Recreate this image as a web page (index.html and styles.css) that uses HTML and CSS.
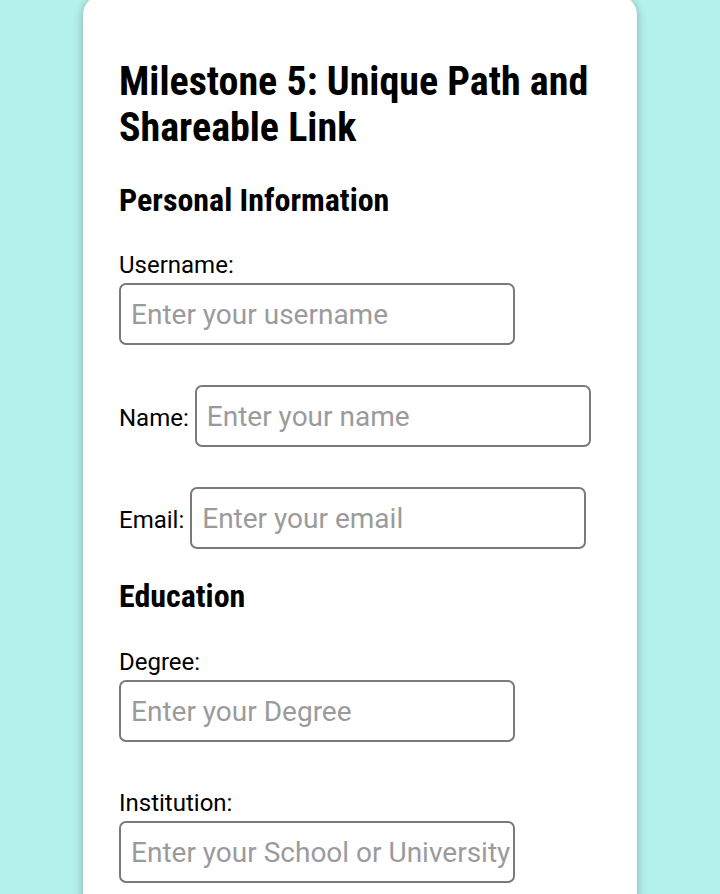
FILE: index.html
```html
<!DOCTYPE html>
<html lang="en">
<head>
<meta charset="utf-8">
<title>Milestone 5: Unique Path and Shareable Link</title>
<link rel="stylesheet" href="styles.css">
</head>
<body>
<main class="card">
  <h1 class="title">Milestone 5: Unique Path and Shareable Link</h1>

  <h2 class="section section--first">Personal Information</h2>
  <div class="field field--stacked field--after-heading">
    <label for="username">Username:</label>
    <input id="username" type="text" placeholder="Enter your username">
  </div>
  <div class="field field--inline">
    <label for="name">Name:</label>
    <input id="name" type="text" placeholder="Enter your name">
  </div>
  <div class="field field--inline">
    <label for="email">Email:</label>
    <input id="email" type="email" placeholder="Enter your email">
  </div>

  <h2 class="section section--next">Education</h2>
  <div class="field field--stacked field--after-heading-2">
    <label for="degree">Degree:</label>
    <input id="degree" type="text" placeholder="Enter your Degree">
  </div>
  <div class="field field--stacked field--spaced">
    <label for="institution">Institution:</label>
    <input id="institution" type="text" placeholder="Enter your School or University">
  </div>
</main>
</body>
</html>
```

FILE: styles.css
```css
html, body {
  margin: 0;
  height: 100%;
  overflow: hidden;
}

body {
  background: #b4f1ea;
  font-family: Roboto, "Noto Sans", sans-serif;
  color: #000;
}

.card {
  box-sizing: border-box;
  width: 554px;
  margin: -5px auto 0;
  min-height: 1000px;
  padding: 64px 38px 40px 36px;
  background: #fff;
  border-radius: 20px 20px 0 0;
  box-shadow: 0 2px 10px rgba(0, 0, 0, 0.28);
  display: flex;
  flex-direction: column;
}

.title,
.section {
  font-family: "Roboto Condensed", Roboto, sans-serif;
  font-stretch: 80%;
  font-weight: 700;
  margin: 0;
  color: #000;
}

.title {
  font-size: 40px;
  line-height: 46px;
}

.section {
  font-size: 32px;
  line-height: 38px;
}

.section--first {
  margin-top: 30px;
}

.section--next {
  margin-top: 28px;
}

.field {
  display: flex;
  align-items: baseline;
  column-gap: 6px;
  margin-top: 40px;
}

.field--stacked {
  flex-direction: column;
  align-items: flex-start;
  row-gap: 4px;
}

.field--after-heading {
  margin-top: 32px;
}

.field--after-heading-2 {
  margin-top: 33px;
}

.field--spaced {
  margin-top: 47px;
}

.field label {
  font-size: 24px;
  line-height: 28px;
  color: #000;
}

.field input {
  flex: none;
  box-sizing: border-box;
  width: 396px;
  height: 62px;
  margin: 0;
  padding: 0 2px 0 10px;
  border: 2px solid #7a7a7a;
  border-radius: 7px;
  background: #fff;
  font-family: Roboto, "Noto Sans", sans-serif;
  font-size: 28px;
  color: #000;
  outline: none;
}

.field input::placeholder {
  color: #9b9b9b;
  opacity: 1;
}
```
